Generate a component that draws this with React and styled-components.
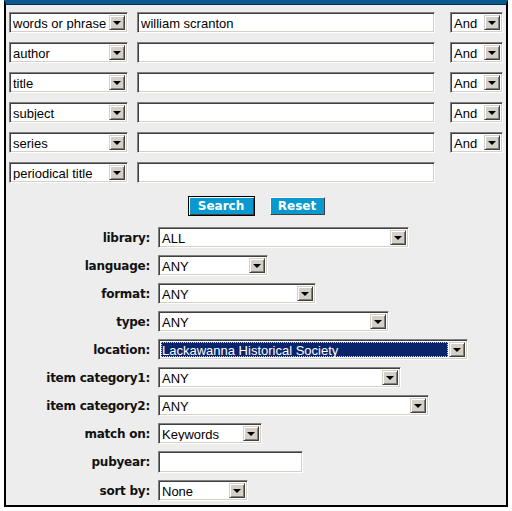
import React from "react";
import styled, { createGlobalStyle, css } from "styled-components";

const GlobalStyle = createGlobalStyle`
  html, body { margin: 0; padding: 0; background: #fff; }
  body { font-family: "Liberation Sans", Arial, sans-serif; }
`;

const Panel = styled.div`
  box-sizing: border-box;
  margin-left: 4px;
  width: 504px;
  height: 507px;
  background: #ededed;
  border: 2px solid #000;
  border-top: 4px solid #0b5a8e;
  box-shadow: inset 0 1px 0 #0a2f4c;
`;

const TermGrid = styled.div`
  display: grid;
  grid-template-columns: 119px 298px 53px;
  column-gap: 9px;
  row-gap: 9px;
  padding: 8px 0 0 3px;
  & > :nth-child(3n) { margin-left: 6px; }
`;

const sunken = css`
  box-sizing: border-box;
  border: 1px solid;
  border-color: #808080 #ffffff #ffffff #808080;
  box-shadow: inset 1px 1px 0 #404040, inset -1px -1px 0 #d4d0c8;
  background: #fff;
`;

const SelectBox = styled.div`
  ${sunken};
  display: flex;
  align-items: stretch;
  height: 21px;
  width: ${(p) => (p.$w ? `${p.$w}px` : "100%")};
  padding: 2px;
  font-size: 13px;
  color: #000;
`;

const SelectText = styled.span`
  flex: 1;
  display: flex;
  align-items: center;
  padding-left: 1px;
  padding-top: 1px;
  white-space: nowrap;
  overflow: hidden;
  ${(p) =>
    p.$active &&
    css`
      background: #0a246a;
      color: #fff;
      outline: 1px dotted #d8d8b0;
      outline-offset: -1px;
      margin-right: 1px;
    `}
`;

const ArrowButton = styled.span`
  box-sizing: border-box;
  width: 16px;
  flex: none;
  background: #d4d0c8;
  border: 1px solid;
  border-color: #d4d0c8 #404040 #404040 #d4d0c8;
  box-shadow: inset 1px 1px 0 #fff, inset -1px -1px 0 #808080;
  display: flex;
  align-items: center;
  justify-content: center;
  &::after {
    content: "";
    width: 0;
    height: 0;
    border-left: 4px solid transparent;
    border-right: 4px solid transparent;
    border-top: 4px solid #000;
    margin-top: 1px;
  }
`;

const TextInput = styled.div`
  ${sunken};
  height: ${(p) => p.$h || 21}px;
  width: ${(p) => (p.$w ? `${p.$w}px` : "100%")};
  padding: 1px 3px 0;
  display: flex;
  align-items: center;
  font-size: 13px;
  color: #000;
`;

const ButtonRow = styled.div`
  display: flex;
  justify-content: center;
  gap: 15px;
  padding: 13px 0 0 0;
`;

const Button = styled.button`
  box-sizing: border-box;
  height: ${(p) => (p.$default ? 20 : 18)}px;
  margin-top: ${(p) => (p.$default ? 0 : 1)}px;
  width: ${(p) => p.$w}px;
  background: #0999cf;
  color: #fff;
  font-family: "DejaVu Sans", Verdana, sans-serif;
  font-weight: bold;
  font-size: 12px;
  padding: 0;
  border: 1px solid;
  border-color: #fff #404040 #404040 #fff;
  ${(p) =>
    p.$default &&
    css`
      border: 1px solid #000;
      box-shadow: inset 1px 1px 0 #fff, inset -1px -1px 0 #404040;
    `}
`;

const FieldGrid = styled.div`
  display: grid;
  grid-template-columns: 144px auto;
  column-gap: 8px;
  row-gap: 7px;
  padding-top: 11px;
  justify-items: start;
  align-items: center;
`;

const Label = styled.label`
  justify-self: end;
  font-family: "DejaVu Sans", Verdana, sans-serif;
  font-weight: bold;
  font-size: 12px;
  letter-spacing: -0.25px;
  color: #111;
  white-space: nowrap;
`;

function Select({ value, w, active }) {
  return (
    <SelectBox $w={w}>
      <SelectText $active={active}>{value}</SelectText>
      <ArrowButton />
    </SelectBox>
  );
}

const terms = [
  { field: "words or phrase", text: "william scranton", op: true },
  { field: "author", text: "", op: true },
  { field: "title", text: "", op: true },
  { field: "subject", text: "", op: true },
  { field: "series", text: "", op: true },
  { field: "periodical title", text: "", op: false },
];

const fields = [
  { label: "library:", value: "ALL", w: 251 },
  { label: "language:", value: "ANY", w: 110 },
  { label: "format:", value: "ANY", w: 158 },
  { label: "type:", value: "ANY", w: 231 },
  { label: "location:", value: "Lackawanna Historical Society", w: 310, active: true },
  { label: "item category1:", value: "ANY", w: 243 },
  { label: "item category2:", value: "ANY", w: 271 },
  { label: "match on:", value: "Keywords", w: 104 },
  { label: "pubyear:", input: true, w: 145 },
  { label: "sort by:", value: "None", w: 90 },
];

export default function App() {
  return (
    <>
      <GlobalStyle />
      <Panel>
        <TermGrid>
          {terms.map((t, i) => (
            <React.Fragment key={i}>
              <Select value={t.field} />
              <TextInput>{t.text}</TextInput>
              {t.op ? <Select value="And" /> : <span />}
            </React.Fragment>
          ))}
        </TermGrid>
        <ButtonRow>
          <Button $default $w={67}>Search</Button>
          <Button $w={55}>Reset</Button>
        </ButtonRow>
        <FieldGrid>
          {fields.map((f, i) => (
            <React.Fragment key={i}>
              <Label>{f.label}</Label>
              {f.input ? (
                <TextInput $w={f.w} $h={22} />
              ) : (
                <Select value={f.value} w={f.w} active={f.active} />
              )}
            </React.Fragment>
          ))}
        </FieldGrid>
      </Panel>
    </>
  );
}
